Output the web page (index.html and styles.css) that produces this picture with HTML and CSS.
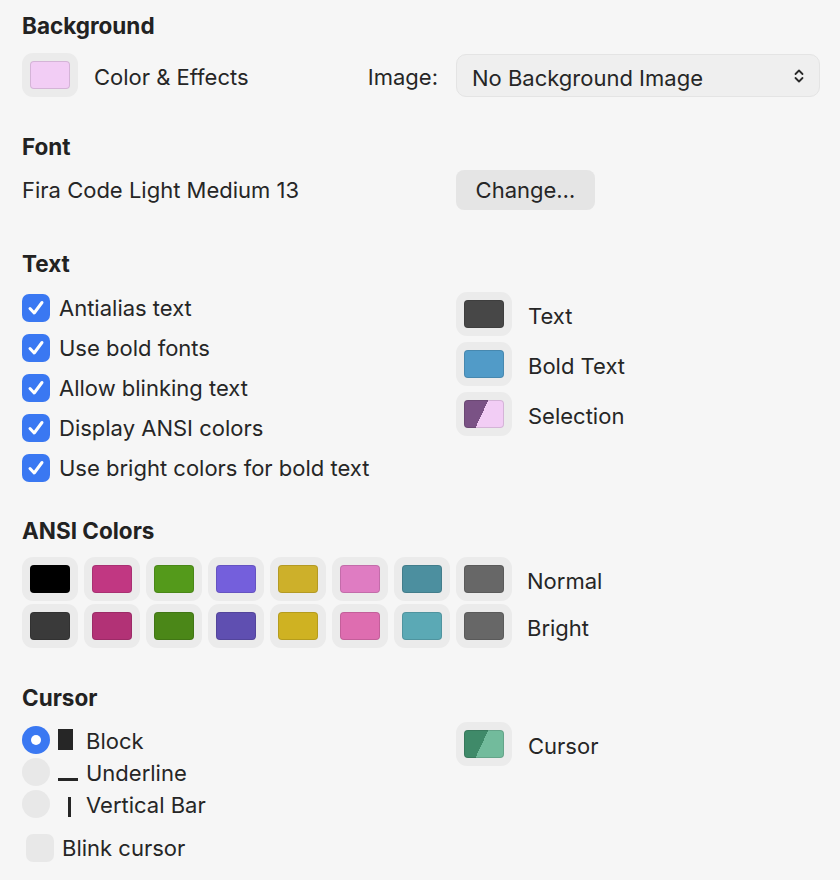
FILE: index.html
```html
<!DOCTYPE html>
<html>
<head>
<meta charset="utf-8">
<link rel="stylesheet" href="styles.css">
</head>
<body>
<div class="page">
  <h2 class="heading h-bg">Background</h2>
  <div class="row r-bg">
    <div class="col-left">
      <div class="well"><span class="swatch" style="background:#f2cdf5"></span></div>
      <span class="label lbl-well">Color &amp; Effects</span>
      <span class="label lbl-low img-label">Image:</span>
    </div>
    <div class="col-right">
      <div class="popup">
        <span class="lbl-low">No Background Image</span>
        <svg class="chev" width="12" height="18" viewBox="0 0 12 18"><path d="M2.5 7 L6 3.5 L9.5 7 M2.5 11 L6 14.5 L9.5 11" fill="none" stroke="#2a2a2a" stroke-width="1.8" stroke-linecap="round" stroke-linejoin="round"/></svg>
      </div>
    </div>
  </div>

  <h2 class="heading h-font">Font</h2>
  <div class="row r-font">
    <div class="col-left"><span class="label">Fira Code Light Medium 13</span></div>
    <div class="col-right"><div class="button">Change…</div></div>
  </div>

  <h2 class="heading h-text">Text</h2>
  <div class="row r-text">
    <div class="col-left checks">
      <div class="check"><span class="cb on"><svg width="28" height="28" viewBox="0 0 28 28"><path d="M8 14.5 L12.2 19 L20 8.5" fill="none" stroke="#fff" stroke-width="3" stroke-linecap="round" stroke-linejoin="round"/></svg></span><span class="label">Antialias text</span></div>
      <div class="check"><span class="cb on"><svg width="28" height="28" viewBox="0 0 28 28"><path d="M8 14.5 L12.2 19 L20 8.5" fill="none" stroke="#fff" stroke-width="3" stroke-linecap="round" stroke-linejoin="round"/></svg></span><span class="label">Use bold fonts</span></div>
      <div class="check"><span class="cb on"><svg width="28" height="28" viewBox="0 0 28 28"><path d="M8 14.5 L12.2 19 L20 8.5" fill="none" stroke="#fff" stroke-width="3" stroke-linecap="round" stroke-linejoin="round"/></svg></span><span class="label">Allow blinking text</span></div>
      <div class="check"><span class="cb on"><svg width="28" height="28" viewBox="0 0 28 28"><path d="M8 14.5 L12.2 19 L20 8.5" fill="none" stroke="#fff" stroke-width="3" stroke-linecap="round" stroke-linejoin="round"/></svg></span><span class="label">Display ANSI colors</span></div>
      <div class="check"><span class="cb on"><svg width="28" height="28" viewBox="0 0 28 28"><path d="M8 14.5 L12.2 19 L20 8.5" fill="none" stroke="#fff" stroke-width="3" stroke-linecap="round" stroke-linejoin="round"/></svg></span><span class="label">Use bright colors for bold text</span></div>
    </div>
    <div class="col-right wells">
      <div class="well-row"><div class="well"><span class="swatch" style="background:#474747"></span></div><span class="label lbl-well">Text</span></div>
      <div class="well-row"><div class="well"><span class="swatch" style="background:#519bc8"></span></div><span class="label lbl-well">Bold Text</span></div>
      <div class="well-row"><div class="well"><span class="swatch split" style="background:linear-gradient(115deg,#7a5285 0 46%,#f2cdf5 46% 100%)"></span></div><span class="label lbl-well">Selection</span></div>
    </div>
  </div>

  <h2 class="heading h-ansi">ANSI Colors</h2>
  <div class="ansi">
    <div class="ansi-row">
      <div class="well"><span class="swatch" style="background:#000000"></span></div>
      <div class="well"><span class="swatch" style="background:#c13782"></span></div>
      <div class="well"><span class="swatch" style="background:#549a1b"></span></div>
      <div class="well"><span class="swatch" style="background:#745fdc"></span></div>
      <div class="well"><span class="swatch" style="background:#cdb02a"></span></div>
      <div class="well"><span class="swatch" style="background:#df7cc2"></span></div>
      <div class="well"><span class="swatch" style="background:#4c8f9f"></span></div>
      <div class="well"><span class="swatch" style="background:#676767"></span></div>
      <span class="label lbl-well lbl-ansi">Normal</span>
    </div>
    <div class="ansi-row">
      <div class="well"><span class="swatch" style="background:#3a3a3a"></span></div>
      <div class="well"><span class="swatch" style="background:#b23276"></span></div>
      <div class="well"><span class="swatch" style="background:#4b8718"></span></div>
      <div class="well"><span class="swatch" style="background:#5f4fb1"></span></div>
      <div class="well"><span class="swatch" style="background:#cfb222"></span></div>
      <div class="well"><span class="swatch" style="background:#de6db0"></span></div>
      <div class="well"><span class="swatch" style="background:#5ba9b5"></span></div>
      <div class="well"><span class="swatch" style="background:#676767"></span></div>
      <span class="label lbl-well lbl-ansi">Bright</span>
    </div>
  </div>

  <h2 class="heading h-cursor">Cursor</h2>
  <div class="row r-cursor">
    <div class="col-left">
      <div class="radios">
        <div class="radio-row"><span class="radio on"></span><span class="glyph g-block"></span><span class="label">Block</span></div>
        <div class="radio-row"><span class="radio"></span><span class="glyph g-under"></span><span class="label">Underline</span></div>
        <div class="radio-row"><span class="radio"></span><span class="glyph g-bar"></span><span class="label">Vertical Bar</span></div>
      </div>
      <div class="check blink"><span class="cb"></span><span class="label">Blink cursor</span></div>
    </div>
    <div class="col-right">
      <div class="well-row cursor-well"><div class="well"><span class="swatch" style="background:linear-gradient(115deg,#3f8a69 0 46%,#72bb9c 46% 100%)"></span></div><span class="label lbl-well">Cursor</span></div>
    </div>
  </div>
</div>
</body>
</html>
```

FILE: styles.css
```css
* { box-sizing: border-box; }
html, body { margin: 0; padding: 0; }
body {
  background: #f6f6f6;
  color: #262626;
  font-family: Inter, "Noto Sans", sans-serif;
  font-size: 22px;
  width: 840px;
  height: 880px;
  overflow: hidden;
}
.page { padding: 12px 20px 0 22px; }

.heading {
  margin: 0;
  font-size: 22.5px;
  font-weight: 700;
  line-height: 28px;
  color: #222;
}
.label { line-height: 28px; white-space: nowrap; }
.lbl-low { padding-top: 4px; line-height: 28px; }

.row { display: grid; grid-template-columns: 434px 364px; }
.col-left { display: flex; align-items: center; }
.col-right { display: flex; align-items: center; }

.well {
  width: 56px; height: 44px;
  border-radius: 11px;
  background: #ebebeb;
  display: flex; align-items: center; justify-content: center;
  flex: none;
}
.swatch {
  width: 40px; height: 28px;
  border-radius: 4px;
  box-shadow: inset 0 0 0 1px rgba(0,0,0,0.12);
}
.lbl-well { margin-left: 16px; padding-top: 4px; }

/* Background */
.r-bg { margin-top: 12px; height: 44px; }
.img-label { margin-left: auto; margin-right: 18px; }
.popup {
  width: 364px; height: 43px;
  margin-top: 2px;
  border-radius: 10px;
  background: #efefef;
  border: 1px solid #e4e4e4;
  display: flex; align-items: center; justify-content: space-between;
  padding: 0 14px 0 15px;
}

/* Font */
.h-font { margin-top: 37px; }
.r-font { margin-top: 9px; height: 40px; }
.button {
  width: 139px; height: 40px;
  border-radius: 8px;
  background: #e5e5e5;
  display: flex; align-items: center; justify-content: center;
}

/* Text */
.h-text { margin-top: 40px; }
.r-text { margin-top: 14px; align-items: start; }
.checks { flex-direction: column; align-items: flex-start; gap: 12px; padding-top: 2px; }
.check { display: flex; align-items: center; height: 28px; }
.cb {
  width: 28px; height: 28px; border-radius: 7px;
  background: #e8e8e8; flex: none; margin-right: 9px;
  display: flex;
}
.cb.on { background: #3a78f2; }
.wells { flex-direction: column; align-items: flex-start; gap: 6px; }
.well-row { display: flex; align-items: center; }

/* ANSI */
.h-ansi { margin-top: 35px; }
.ansi { margin-top: 12px; display: flex; flex-direction: column; gap: 3px; }
.ansi-row { display: flex; align-items: center; gap: 6px; }
.lbl-ansi { margin-left: 9px; }

/* Cursor */
.h-cursor { margin-top: 36px; }
.r-cursor { margin-top: 14px; align-items: start; }
.r-cursor .col-left { flex-direction: column; align-items: flex-start; }
.radios { display: flex; flex-direction: column; gap: 4px; }
.radio-row { display: flex; align-items: center; height: 28px; }
.radio-row .label { padding-top: 2px; }
.radio {
  width: 28px; height: 28px; border-radius: 50%;
  background: #e8e8e8; flex: none; margin-right: 8px;
  display: flex; align-items: center; justify-content: center;
}
.radio.on { background: #3a78f2; }
.radio.on::after { content: ""; width: 10px; height: 10px; border-radius: 50%; background: #fff; }
.glyph { width: 20px; height: 28px; flex: none; margin-right: 8px; position: relative; }
.g-block::after { content: ""; position: absolute; left: 0; top: 3px; width: 15px; height: 21px; background: #262626; }
.g-under::after { content: ""; position: absolute; left: 0; top: 20px; width: 20px; height: 3px; background: #262626; }
.g-bar::after { content: ""; position: absolute; left: 10px; top: 7px; width: 3px; height: 20px; background: #262626; }
.blink { margin-top: 16px; margin-left: 4px; }
.blink .cb { margin-right: 8px; }
.cursor-well { margin-top: -4px; }
```
